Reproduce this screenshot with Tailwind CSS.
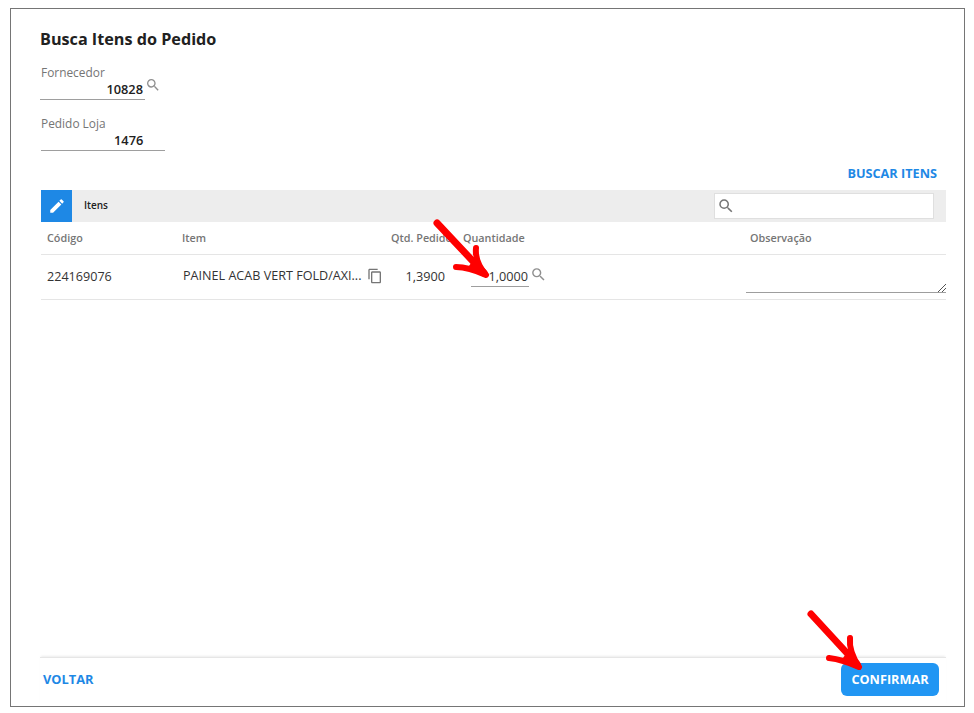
<!DOCTYPE html>
<html lang="en">
<head>
    <meta charset="UTF-8">
    <title>Busca Itens do Pedido</title>
    <script src="https://cdn.jsdelivr.net/npm/@tailwindcss/browser@4"></script>
</head>
<body class="bg-white font-['Open_Sans',sans-serif] text-[#212121]">
    <div class="relative w-[974px] h-[713px] pt-2 pl-2.5 overflow-hidden">
        <!-- Frame -->
        <div class="w-[955px] h-[699px] border border-[#757575] flex flex-col pl-[29px] pr-[18px]">

            <h1 class="mt-[19px] h-[22px] text-[16.2px] leading-[22px] font-bold">Busca Itens do Pedido</h1>

            <!-- Fornecedor -->
            <div class="mt-[14px] pl-px text-[11.9px] leading-4 text-[#757575]">Fornecedor</div>
            <div class="flex h-[20px]">
                <div class="w-[105px] h-[20px] border-b border-[#9e9e9e] text-right pr-0.5 text-[12.8px] leading-[18px] font-semibold">10828</div>
                <svg class="w-[16px] h-[16px] -mt-[3px] text-[#8f8f8f]" viewBox="0 0 24 24" fill="currentColor"><path d="M15.5 14h-.79l-.28-.27A6.47 6.47 0 0 0 16 9.5 6.5 6.5 0 1 0 9.5 16c1.61 0 3.09-.59 4.23-1.57l.27.28v.79l5 4.99L20.49 19l-4.99-5zm-6 0C7.01 14 5 11.99 5 9.5S7.01 5 9.5 5 14 7.01 14 9.5 11.99 14 9.5 14z"/></svg>
            </div>

            <!-- Pedido Loja -->
            <div class="mt-[15px] pl-px text-[11.9px] leading-4 text-[#757575]">Pedido Loja</div>
            <div class="ml-px w-[124px] h-[20px] border-b border-[#9e9e9e] text-[12.8px] leading-[18px] font-semibold pl-[73px]">1476</div>

            <div class="mt-[13px] h-[18px] flex justify-end pr-[9px]">
                <span class="text-[12.7px] leading-[18px] font-bold text-[#1e88e5]">BUSCAR ITENS</span>
            </div>

            <!-- Toolbar -->
            <div class="mt-[8px] ml-px h-[32px] bg-[#ededed] flex items-center">
                <div class="w-[31px] h-[32px] bg-[#1e88e5] flex items-center justify-center">
                    <svg class="w-[18px] h-[18px] text-white" viewBox="0 0 24 24" fill="currentColor"><path d="M3 17.25V21h3.75L17.81 9.94l-3.75-3.75L3 17.25zM20.71 7.04a1 1 0 0 0 0-1.41l-2.34-2.34a1 1 0 0 0-1.41 0l-1.83 1.83 3.75 3.75 1.83-1.83z"/></svg>
                </div>
                <span class="ml-3 -mt-0.5 text-[10px] leading-4 font-semibold">Itens</span>
                <div class="ml-auto mr-3 w-[220px] h-[26px] bg-white border border-[#dfdfdf] flex items-center pl-[2px]">
                    <svg class="w-[18px] h-[18px] text-[#757575]" viewBox="0 0 24 24" fill="currentColor"><path d="M15.5 14h-.79l-.28-.27A6.47 6.47 0 0 0 16 9.5 6.5 6.5 0 1 0 9.5 16c1.61 0 3.09-.59 4.23-1.57l.27.28v.79l5 4.99L20.49 19l-4.99-5zm-6 0C7.01 14 5 11.99 5 9.5S7.01 5 9.5 5 14 7.01 14 9.5 11.99 14 9.5 14z"/></svg>
                </div>
            </div>

            <!-- Header row -->
            <div class="ml-px h-[33px] border-b border-[#e5e5e5] flex items-center text-[10.8px] font-semibold text-[#757575]">
                <span class="pl-[6px] w-[141px]">Código</span>
                <span class="w-[209px]">Item</span>
                <span class="w-[72px] whitespace-nowrap">Qtd. Pedido</span>
                <span class="w-[287px]">Quantidade</span>
                <span>Observação</span>
            </div>

            <!-- Data row -->
            <div class="ml-px h-[45px] border-b border-[#e5e5e5] flex text-[#333]">
                <span class="pl-[6px] w-[141px] text-[12.6px] leading-[44px]">224169076</span>
                <span class="w-[199px] shrink-0 flex items-center h-[42px] text-[12.6px] whitespace-nowrap pl-px">PAINEL ACAB VERT FOLD/AXI...
                    <svg class="w-[16px] h-[16px] shrink-0 ml-[6px] text-[#757575]" viewBox="0 0 24 24" fill="currentColor"><path d="M16 1H4c-1.1 0-2 .9-2 2v14h2V3h12V1zm3 4H8c-1.1 0-2 .9-2 2v14c0 1.1.9 2 2 2h11c1.1 0 2-.9 2-2V7c0-1.1-.9-2-2-2zm0 16H8V7h11v14z"/></svg>
                </span>
                <span class="w-[64px] shrink-0 text-right text-[12.7px] leading-[42px]">1,3900</span>
                <div class="ml-[26px] w-[58px] shrink-0 h-[32px] border-b border-[#9e9e9e] text-right pr-px text-[12.7px] leading-[43px]">1,0000</div>
                <svg class="w-[17px] h-[17px] shrink-0 ml-px mt-[11px] text-[#8f8f8f]" viewBox="0 0 24 24" fill="currentColor"><path d="M15.5 14h-.79l-.28-.27A6.47 6.47 0 0 0 16 9.5 6.5 6.5 0 1 0 9.5 16c1.61 0 3.09-.59 4.23-1.57l.27.28v.79l5 4.99L20.49 19l-4.99-5zm-6 0C7.01 14 5 11.99 5 9.5S7.01 5 9.5 5 14 7.01 14 9.5 11.99 14 9.5 14z"/></svg>
                <div class="relative ml-auto w-[200px] h-[38px] border-b border-[#9e9e9e]">
                    <svg class="absolute right-0 bottom-0 w-[8px] h-[8px] text-[#555]" viewBox="0 0 8 8" fill="none" stroke="currentColor" stroke-width="1"><path d="M0 8 8 0M4 8 8 4"/></svg>
                </div>
            </div>

            <!-- Footer -->
            <div class="mt-auto border-t border-[#e6e6e6] shadow-[0_-2px_2px_-1px_rgba(0,0,0,0.08)] h-[49px] flex items-start justify-between pl-[3px] pr-[7px]">
                <span class="mt-[12px] text-[12.8px] leading-[18px] font-bold text-[#1e88e5]">VOLTAR</span>
                <div class="mt-[5px] w-[98px] h-[33px] rounded-md bg-[#2196f3] text-white text-[12.7px] font-bold flex items-center justify-center">CONFIRMAR</div>
            </div>
        </div>

        <!-- Red annotation arrows -->
        <svg class="absolute left-0 top-0 w-[974px] h-[713px] pointer-events-none" viewBox="0 0 974 713" fill="none" stroke="#ff0000" stroke-linecap="round" stroke-linejoin="round">
            <path d="M437 223 L484 273" stroke-width="7"/>
            <path d="M476 248 C475 258 480 268 486 275 C475 270 465 267 456 267" stroke-width="6"/>
            <path d="M473 262 L486 276 L468 269 Z" fill="#ff0000" stroke-width="2"/>
            <path d="M811 614 L857 664" stroke-width="7"/>
            <path d="M850 638 C849 648 853 658 859 667 C848 662 838 659 829 658" stroke-width="6"/>
            <path d="M847 654 L860 669 L842 661 Z" fill="#ff0000" stroke-width="2"/>
        </svg>
    </div>
</body>
</html>
